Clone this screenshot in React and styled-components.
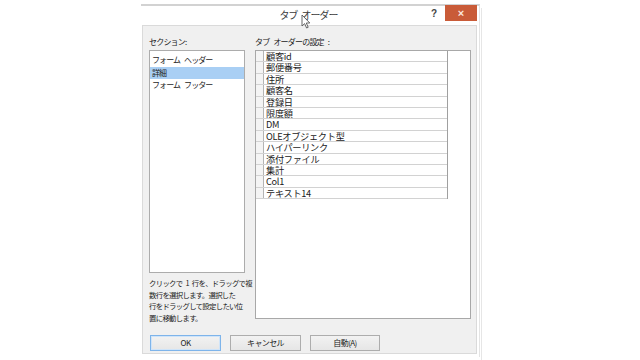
import React from 'react'
import styled, { createGlobalStyle } from 'styled-components'

const GlobalStyle = createGlobalStyle`
  html, body {
    margin: 0;
    padding: 0;
    background: #ffffff;
    font-family: "Noto Sans CJK JP", "Liberation Sans", sans-serif;
    color: #1e1e1e;
  }
`

const Page = styled.div`
  display: flex;
  align-items: flex-start;
  width: 640px;
  height: 360px;
  padding-left: 141px;
  box-sizing: border-box;
  overflow: hidden;
`

const Dialog = styled.div`
  width: 339px;
  margin-top: 4px;
  background: #ffffff;
  border-top: 2px solid #d2d2d2;
  border-right: 1px solid #e4e4e4;
  padding: 0 2px 3px 1px;
  box-sizing: border-box;
  display: flex;
  flex-direction: column;
`

const TitleBar = styled.div`
  position: relative;
  height: 19px;
  display: flex;
  align-items: flex-start;
`

const Title = styled.div`
  flex: 1;
  text-align: center;
  padding-left: 44px;
  font-size: 10px;
  letter-spacing: -1px;
  word-spacing: 3px;
  line-height: 18px;
  color: #3a3a3a;
`

const HelpMark = styled.div`
  width: 14px;
  font-family: "Liberation Sans", sans-serif;
  font-weight: bold;
  font-size: 10px;
  line-height: 16px;
  color: #444;
`

const CloseButton = styled.div`
  width: 32px;
  height: 16px;
  margin-top: -1px;
  background: #c95b38;
  color: #fbe6df;
  font-family: "Liberation Sans", sans-serif;
  font-size: 11px;
  font-weight: bold;
  line-height: 16px;
  text-align: center;
`

const Cursor = styled.svg`
  position: absolute;
  left: 159px;
  top: 8px;
`

const Body = styled.div`
  height: 329px;
  background: #f0f0f0;
  border: 1px solid #dadada;
  padding: 10px 5px 5px 6px;
  box-sizing: border-box;
  display: flex;
  flex-direction: column;
`

const Columns = styled.div`
  display: grid;
  grid-template-columns: 96px 216px;
  column-gap: 10px;
`

const Column = styled.div`
  display: flex;
  flex-direction: column;
`

const Label = styled.div`
  height: 12px;
  margin-bottom: 2px;
  font-size: 8px;
  letter-spacing: -0.8px;
  word-spacing: 3px;
  line-height: 12px;
  color: #222;
  white-space: nowrap;
`

const ListBox = styled.div`
  height: 223px;
  background: #fff;
  border: 1px solid #acacac;
  box-sizing: border-box;
  padding-top: 3px;
`

const ListItem = styled.div`
  height: 12.5px;
  padding-left: 2px;
  font-size: 8px;
  letter-spacing: -0.9px;
  word-spacing: 3px;
  line-height: 12.5px;
  white-space: nowrap;
  background: ${p => (p.$selected ? '#a9cff4' : 'transparent')};
`

const HelpText = styled.div`
  margin-top: 4px;
  font-size: 7.4px;
  letter-spacing: -0.7px;
  word-spacing: 2px;
  line-height: 11.6px;
  color: #222;
  white-space: nowrap;
`

const GridBox = styled.div`
  height: 269px;
  background: #fff;
  border: 1px solid #a8a8a8;
  box-sizing: border-box;
`

const OrderTable = styled.div`
  width: 191px;
  border-right: 1px solid #a0a0a0;
  display: flex;
  flex-direction: column;
`

const OrderRow = styled.div`
  display: flex;
  height: 11.4px;
  border-bottom: 1px solid #d2d2d2;
  box-sizing: border-box;
`

const Selector = styled.div`
  width: 7px;
  border-right: 1px solid #b4b4b4;
  background: #f4f4f4;
`

const FieldName = styled.div`
  flex: 1;
  padding-left: 2px;
  font-size: 9.2px;
  letter-spacing: -0.3px;
  line-height: 10.4px;
  white-space: nowrap;
  color: #1a1a1a;
`

const ButtonRow = styled.div`
  display: flex;
  gap: 9px;
  margin-top: 12px;
  padding-left: 1px;
`

const Button = styled.div`
  width: ${p => p.$w || 71}px;
  height: 16px;
  box-sizing: border-box;
  border: 1px solid ${p => (p.$default ? '#7eb4ea' : '#adadad')};
  box-shadow: ${p => (p.$default ? 'inset 0 0 0 1px #cfe4f9' : 'none')};
  background: linear-gradient(#f2f2f2, #e6e6e6);
  text-align: center;
  font-size: 8px;
  letter-spacing: -0.6px;
  line-height: 14px;
  color: #222;
`

const Ruler = styled.div`
  margin-left: 1px;
  margin-top: 8px;
  width: 7px;
  height: 352px;
  border-left: 1px solid #e6e6e6;
  display: flex;
  flex-direction: column;
  padding-top: 64px;
  box-sizing: border-box;
`

const Tick = styled.div`
  width: 6px;
  height: 1px;
  margin-bottom: 26.5px;
  background: ${p => (p.$dark ? '#9a9a9a' : '#c4c4c4')};
`

const sections = ['フォーム ヘッダー', '詳細', 'フォーム フッター']

const fields = [
  '顧客id', '郵便番号', '住所', '顧客名', '登録日', '限度額', 'DM',
  'OLEオブジェクト型', 'ハイパーリンク', '添付ファイル', '集計', 'Col1', 'テキスト14',
]

export default function App() {
  return (
    <>
      <GlobalStyle />
      <Page>
        <Dialog>
          <TitleBar>
            <Title>タブ オーダー</Title>
            <HelpMark>?</HelpMark>
            <CloseButton>×</CloseButton>
            <Cursor width="10" height="15" viewBox="0 0 10 15">
              <path d="M1 1 L1 12 L3.6 9.6 L5.6 14 L7.2 13.3 L5.3 9 L8.8 9 Z" fill="#fff" stroke="#555" strokeWidth="0.9" strokeLinejoin="round" />
            </Cursor>
          </TitleBar>
          <Body>
            <Columns>
              <Column>
                <Label>セクション:</Label>
                <ListBox>
                  {sections.map(s => (
                    <ListItem key={s} $selected={s === '詳細'}>{s}</ListItem>
                  ))}
                </ListBox>
                <HelpText>
                  クリックで 1 行を、ドラッグで複<br />
                  数行を選択します。選択した<br />
                  行をドラッグして設定したい位<br />
                  置に移動します。
                </HelpText>
              </Column>
              <Column>
                <Label>タブ オーダーの設定 :</Label>
                <GridBox>
                  <OrderTable>
                    {fields.map(f => (
                      <OrderRow key={f}>
                        <Selector />
                        <FieldName>{f}</FieldName>
                      </OrderRow>
                    ))}
                  </OrderTable>
                </GridBox>
              </Column>
            </Columns>
            <ButtonRow>
              <Button $default>OK</Button>
              <Button>キャンセル</Button>
              <Button $w={70}>自動(A)</Button>
            </ButtonRow>
          </Body>
        </Dialog>
        <Ruler>
          {Array.from({ length: 11 }).map((_, i) => (
            <Tick key={i} $dark={i === 3} />
          ))}
        </Ruler>
      </Page>
    </>
  )
}
